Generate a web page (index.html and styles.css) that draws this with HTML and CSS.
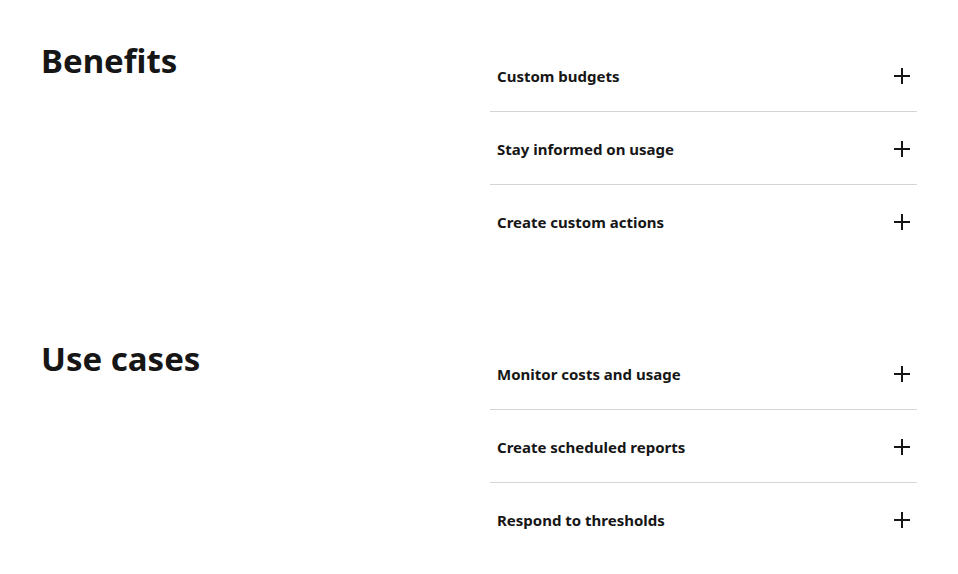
FILE: index.html
```html
<!DOCTYPE html>
<html lang="en">
<head>
<meta charset="utf-8">
<title>Benefits and use cases</title>
<link rel="stylesheet" href="styles.css">
</head>
<body>
<main class="page">
  <section class="section">
    <h2 class="heading">Benefits</h2>
    <div class="accordion">
      <div class="item"><span class="label">Custom budgets</span><svg class="plus" viewBox="0 0 16 16"><path d="M8 0v16M0 8h16"/></svg></div>
      <div class="item"><span class="label">Stay informed on usage</span><svg class="plus" viewBox="0 0 16 16"><path d="M8 0v16M0 8h16"/></svg></div>
      <div class="item"><span class="label">Create custom actions</span><svg class="plus" viewBox="0 0 16 16"><path d="M8 0v16M0 8h16"/></svg></div>
    </div>
  </section>
  <section class="section">
    <h2 class="heading">Use cases</h2>
    <div class="accordion">
      <div class="item"><span class="label">Monitor costs and usage</span><svg class="plus" viewBox="0 0 16 16"><path d="M8 0v16M0 8h16"/></svg></div>
      <div class="item"><span class="label">Create scheduled reports</span><svg class="plus" viewBox="0 0 16 16"><path d="M8 0v16M0 8h16"/></svg></div>
      <div class="item"><span class="label">Respond to thresholds</span><svg class="plus" viewBox="0 0 16 16"><path d="M8 0v16M0 8h16"/></svg></div>
    </div>
  </section>
</main>
</body>
</html>
```
FILE: styles.css
```css
html, body {
  margin: 0;
  background: #ffffff;
}
body {
  font-family: "Noto Sans", "Open Sans", sans-serif;
  color: #161d26;
}
.page {
  padding: 39px 41px 0 41px;
  display: flex;
  flex-direction: column;
  gap: 80px;
}
.section {
  display: grid;
  grid-template-columns: 1fr 427px;
  align-items: start;
}
.heading {
  margin: 2px 0 0 0;
  font-size: 33px;
  line-height: 40px;
  font-weight: 700;
  color: #161616;
}
.accordion {
  display: flex;
  flex-direction: column;
}
.item {
  height: 70px;
  padding: 2px 7px 0 7px;
  display: flex;
  align-items: center;
  justify-content: space-between;
  border-bottom: 1px solid #d5d5d5;
}
.item:last-child {
  border-bottom: none;
}
.label {
  font-size: 15px;
  font-weight: 700;
  color: #161616;
}
.plus {
  width: 16px;
  height: 16px;
  stroke: #161616;
  stroke-width: 2;
  fill: none;
}
```
